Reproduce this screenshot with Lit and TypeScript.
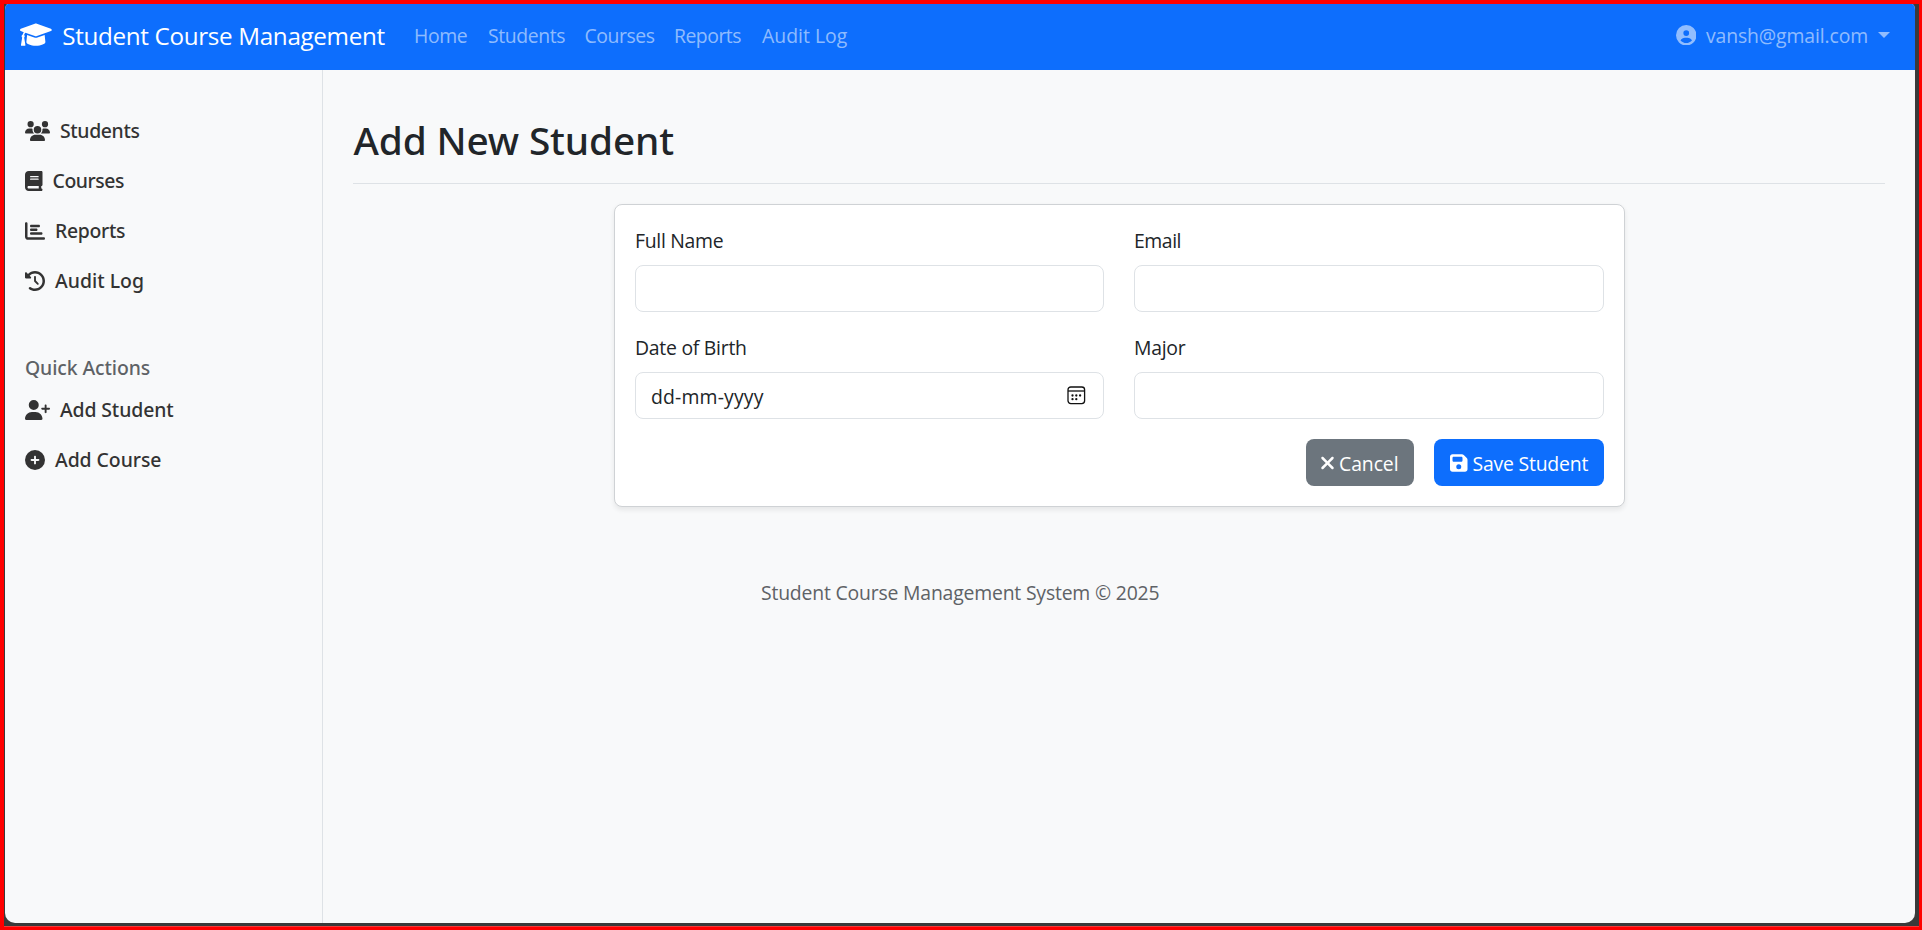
import { LitElement, html, css } from "lit";
import { styleMap } from "lit/directives/style-map.js";

interface Icon {
  w: number;
  d: string;
}

const ICONS: Record<string, Icon> = {
  cap: {
    w: 640,
    d: "M623.1 136.9l-282.7-101.2c-13.73-4.91-28.7-4.91-42.43 0L16.05 136.9C6.438 140.4 0 149.6 0 160s6.438 19.65 16.05 23.09L76.07 204.6c-11.89 15.8-20.26 34.16-24.55 53.95C40.05 263.4 32 274.8 32 288c0 9.953 4.814 18.49 11.94 24.36l-24.83 149C17.48 471.1 25 480 34.89 480H93.11c9.887 0 17.41-8.879 15.78-18.63l-24.83-149C91.19 306.5 96 297.1 96 288c0-10.29-5.174-19.03-12.72-24.89c4.252-17.76 12.88-33.82 24.94-47.03l190.6 68.23c13.73 4.91 28.7 4.91 42.43 0l282.7-101.2C633.6 179.6 640 170.4 640 160S633.6 140.4 623.1 136.9zM351.1 314.4C341.7 318.1 330.9 320 320 320c-10.92 0-21.69-1.867-32-5.555L142.8 262.5L128 405.3C128 446.6 213.1 480 320 480c105.1 0 192-33.4 192-74.67l-14.78-142.9L351.1 314.4z",
  },
  users: {
    w: 640,
    d: "M144 0a80 80 0 1 1 0 160A80 80 0 1 1 144 0zM512 0a80 80 0 1 1 0 160A80 80 0 1 1 512 0zM0 298.700C0 239.800 47.800 192 106.700 192h42.700c15.900 0 31 3.500 44.600 9.700c-1.300 7.200-1.900 14.700-1.900 22.300c0 38.200 16.800 72.500 43.300 96c-.2 0-.4 0-.7 0H21.300C9.600 320 0 310.400 0 298.700zM405.300 320c-.2 0-.4 0-.7 0c26.600-23.500 43.300-57.800 43.300-96c0-7.600-.7-15-1.900-22.300c13.600-6.300 28.700-9.700 44.600-9.700h42.700C592.200 192 640 239.800 640 298.700c0 11.800-9.600 21.300-21.300 21.300H405.300zM224 224a96 96 0 1 1 192 0 96 96 0 1 1 -192 0zM128 485.300C128 411.700 187.700 352 261.300 352H378.700C452.300 352 512 411.700 512 485.300c0 14.700-11.900 26.700-26.700 26.700H154.700c-14.700 0-26.700-11.900-26.700-26.700z",
  },
  book: {
    w: 448,
    d: "M96 0C43 0 0 43 0 96V416c0 53 43 96 96 96H384h32c17.700 0 32-14.300 32-32s-14.300-32-32-32V384c17.700 0 32-14.300 32-32V32c0-17.700-14.300-32-32-32H384 96zm0 384H352v64H96c-17.700 0-32-14.300-32-32s14.300-32 32-32zm32-240c0-8.800 7.200-16 16-16H336c8.800 0 16 7.200 16 16s-7.200 16-16 16H144c-8.800 0-16-7.200-16-16zm16 48H336c8.800 0 16 7.200 16 16s-7.200 16-16 16H144c-8.800 0-16-7.200-16-16s7.200-16 16-16z",
  },
  chart: {
    w: 512,
    d: "M32 32c17.700 0 32 14.300 32 32V400c0 8.800 7.200 16 16 16H480c17.700 0 32 14.300 32 32s-14.300 32-32 32H80c-44.200 0-80-35.800-80-80V64C0 46.300 14.300 32 32 32zm96 96c0-17.700 14.300-32 32-32l192 0c17.700 0 32 14.300 32 32s-14.300 32-32 32H160c-17.700 0-32-14.300-32-32zm32 64H288c17.700 0 32 14.300 32 32s-14.300 32-32 32H160c-17.700 0-32-14.300-32-32s14.300-32 32-32zm0 96H416c17.700 0 32 14.300 32 32s-14.300 32-32 32H160c-17.700 0-32-14.300-32-32s14.300-32 32-32z",
  },
  history: {
    w: 512,
    d: "M75 75L41 41C25.900 25.900 0 36.600 0 57.900V168c0 13.300 10.700 24 24 24H134.100c21.400 0 32.100-25.900 17-41l-30.800-30.800C155 85.500 203 64 256 64c106 0 192 86 192 192s-86 192-192 192c-40.800 0-78.600-12.700-109.700-34.400c-14.500-10.100-34.400-6.600-44.600 7.900s-6.600 34.400 7.900 44.600C151.200 495 201.700 512 256 512c141.400 0 256-114.600 256-256S397.400 0 256 0C185.300 0 121.300 28.700 75 75zm181 53c-13.300 0-24 10.700-24 24V256c0 6.400 2.500 12.500 7 17l72 72c9.400 9.400 24.600 9.400 33.900 0s9.400-24.600 0-33.900l-65-65V152c0-13.300-10.700-24-24-24z",
  },
  userPlus: {
    w: 640,
    d: "M96 128a128 128 0 1 1 256 0A128 128 0 1 1 96 128zM0 482.300C0 383.800 79.800 304 178.300 304h91.400C368.200 304 448 383.800 448 482.300c0 16.400-13.300 29.700-29.700 29.700H29.700C13.300 512 0 498.700 0 482.300zM504 312V248H440c-13.300 0-24-10.700-24-24s10.700-24 24-24h64V136c0-13.300 10.700-24 24-24s24 10.700 24 24v64h64c13.300 0 24 10.700 24 24s-10.700 24-24 24H552v64c0 13.300-10.700 24-24 24s-24-10.700-24-24z",
  },
  plusCircle: {
    w: 512,
    d: "M256 512A256 256 0 1 0 256 0a256 256 0 1 0 0 512zM232 344V280H168c-13.300 0-24-10.700-24-24s10.700-24 24-24h64V168c0-13.300 10.700-24 24-24s24 10.700 24 24v64h64c13.300 0 24 10.700 24 24s-10.700 24-24 24H280v64c0 13.300-10.700 24-24 24s-24-10.700-24-24z",
  },
  userCircle: {
    w: 512,
    d: "M399 384.200C376.900 345.800 335.400 320 288 320H224c-47.400 0-88.900 25.800-111 64.200c35.200 39.200 86.200 63.800 143 63.800s107.800-24.700 143-63.800zM0 256a256 256 0 1 1 512 0A256 256 0 1 1 0 256zm256 16a72 72 0 1 0 0-144 72 72 0 1 0 0 144z",
  },
  times: {
    w: 384,
    d: "M342.600 150.600c12.500-12.500 12.500-32.800 0-45.300s-32.800-12.500-45.300 0L192 210.700 86.600 105.400c-12.500-12.500-32.800-12.500-45.300 0s-12.500 32.800 0 45.300L146.700 256 41.400 361.400c-12.500 12.500-12.500 32.800 0 45.300s32.800 12.500 45.300 0L192 301.300 297.400 406.600c12.500 12.500 32.800 12.500 45.300 0s12.500-32.800 0-45.300L237.300 256 342.600 150.600z",
  },
  save: {
    w: 448,
    d: "M64 32C28.700 32 0 60.700 0 96V416c0 35.300 28.700 64 64 64H384c35.300 0 64-28.700 64-64V173.300c0-17-6.700-33.300-18.700-45.300L352 50.700C340 38.700 323.700 32 306.700 32H64zm0 96c0-17.700 14.300-32 32-32H288c17.700 0 32 14.300 32 32v64c0 17.700-14.300 32-32 32H96c-17.700 0-32-14.300-32-32V128zM224 288a64 64 0 1 1 0 128 64 64 0 1 1 0-128z",
  },
};

const icon = (name: string, size = 20) => {
  const i = ICONS[name];
  return html`<svg class="icon" viewBox="0 0 ${i.w} 512" width=${(i.w / 512) * size} height=${size}>
    <path fill="currentColor" fill-rule="evenodd" d=${i.d}></path>
  </svg>`;
};

/* Text run with its own tracking, in pixels. */
const run = (text: string, tracking: number) =>
  html`<span class="run" style=${styleMap({ letterSpacing: `${tracking}px` })}>${text}</span>`;

const NAV = [
  { text: "Home", tracking: -0.378, width: 54 },
  { text: "Students", tracking: -0.398, width: 76.5 },
  { text: "Courses", tracking: -0.436, width: 69.5 },
  { text: "Reports", tracking: -0.502, width: 68 },
  { text: "Audit Log", tracking: 0.018, width: 86 },
];

const SIDE = [
  { icon: "users", text: "Students", tracking: -0.36 },
  { icon: "book", text: "Courses", tracking: -0.43 },
  { icon: "chart", text: "Reports", tracking: -0.3 },
  { icon: "history", text: "Audit Log", tracking: 0.02 },
];

const QUICK = [
  { icon: "userPlus", text: "Add Student", tracking: -0.116 },
  { icon: "plusCircle", text: "Add Course", tracking: -0.05 },
];

class AppRoot extends LitElement {
  static styles = css`
    :host {
      display: block;
      box-sizing: border-box;
      width: 1922px;
      height: 930px;
      background: #3a3a3a;
      border: solid #f00;
      border-width: 4px 3px 3px 4px;
      font: 400 19.4px/30px "Open Sans", "Noto Sans", sans-serif;
      color: #212529;
    }
    * { box-sizing: border-box; }
    .frame {
      height: 100%;
      padding: 0 4px 3px 1px;
      border-bottom: 1px solid #f53a3a;
    }
    .page {
      height: 100%;
      display: flex;
      flex-direction: column;
      background: #f8f9fa;
      border-radius: 3px 3px 10px 10px / 6px 6px 10px 10px;
      overflow: hidden;
    }
    .icon { display: block; flex: none; }
    .run { white-space: nowrap; }
    .navbar {
      flex: 0 0 66px;
      display: flex;
      align-items: center;
      padding: 0 25px 4px 15px;
      background: #0d6efd;
      color: rgba(255, 255, 255, 0.55);
    }
    .brand {
      display: flex;
      align-items: center;
      gap: 10.5px;
      width: 394px;
      color: #fff;
      font-size: 24.25px;
    }
    .brand .run { padding-top: 1px; }
    .links { display: flex; gap: 20px; flex: 1; padding-top: 1px; }
    .user { display: flex; align-items: center; gap: 10px; }
    .user .run { padding-top: 1px; }
    .caret {
      border: 6px solid transparent;
      border-top-color: currentColor;
      border-bottom: 0;
    }
    .body { flex: 1; display: flex; min-height: 0; }
    .side {
      flex: 0 0 318px;
      border-right: 1px solid #dee2e6;
      padding: 36px 20px 0;
      font-family: "Noto Sans", sans-serif;
      font-weight: 500;
      color: #333;
    }
    .item { display: flex; align-items: center; gap: 10px; height: 50px; }
    .heading { height: 30px; margin: 47px 0 1.5px; color: #5e6266; }
    .main { flex: 1; padding: 46px 30px 0; }
    h1 {
      margin: 0;
      height: 68px;
      padding-left: 0.5px;
      border-bottom: 1px solid #dee2e6;
      font: 500 38.8px/48px "Noto Sans", sans-serif;
    }
    .card {
      width: 1011px;
      height: 303px;
      margin: 20px 0 0 261px;
      padding: 20px;
      background: #fff;
      border: 1px solid #cfd2d5;
      border-radius: 8px;
      box-shadow: 0 2.5px 5px rgba(0, 0, 0, 0.075);
    }
    .fields { display: grid; grid-template-columns: 469px 470px; gap: 20px 30px; }
    .field { display: flex; flex-direction: column; gap: 9px; height: 87px; }
    .label { height: 31px; padding-top: 1px; }
    .input {
      display: flex;
      align-items: center;
      justify-content: space-between;
      height: 47px;
      padding: 2px 17.5px 0 15px;
      border: 1px solid #dee2e6;
      border-radius: 8px;
      background: #fff;
    }
    .cal { display: block; margin-top: -2px; }
    .actions { display: flex; justify-content: flex-end; gap: 20px; margin-top: 20px; }
    .btn {
      display: flex;
      align-items: center;
      gap: 4px;
      height: 47px;
      padding: 0 0 0 14px;
      border: 0;
      border-radius: 8px;
      color: #fff;
      font: inherit;
    }
    .btn .run { padding-top: 2px; }
    .cancel { width: 108px; background: #6c757d; }
    .save { width: 170px; padding-left: 16px; gap: 5px; background: #0d6efd; }
    .footer { margin: 71px 0 0 408px; color: #5e6266; }
  `;

  private field(text: string, tracking: number, content: unknown = "") {
    return html`<div class="field">
      <div class="label">${run(text, tracking)}</div>
      <div class="input">${content}</div>
    </div>`;
  }

  render() {
    return html`<div class="frame"><div class="page">
      <nav class="navbar">
        <div class="brand">${icon("cap", 25.4)}${run("Student Course Management", -0.346)}</div>
        <div class="links">
          ${NAV.map((n) => html`<div style=${styleMap({ width: `${n.width}px` })}>${run(n.text, n.tracking)}</div>`)}
        </div>
        <div class="user">${icon("userCircle", 20.5)}${run("vansh@gmail.com", -0.13)}<span class="caret"></span></div>
      </nav>
      <div class="body">
        <aside class="side">
          ${SIDE.map((s) => html`<div class="item">${icon(s.icon)}${run(s.text, s.tracking)}</div>`)}
          <div class="heading">${run("Quick Actions", -0.1)}</div>
          ${QUICK.map((s) => html`<div class="item">${icon(s.icon)}${run(s.text, s.tracking)}</div>`)}
        </aside>
        <main class="main">
          <h1>${run("Add New Student", -0.15)}</h1>
          <section class="card">
            <div class="fields">
              ${this.field("Full Name", -0.286)}
              ${this.field("Email", -0.457)}
              ${this.field("Date of Birth", -0.26, html`${run("dd-mm-yyyy", 0.167)}
                <svg class="cal" width="19" height="19" viewBox="0 0 19 19">
                  <rect x="1" y="1" width="16.6" height="16.6" rx="2.8" fill="none" stroke="#111" stroke-width="1.3"></rect>
                  <path d="M1 5H17.6" stroke="#111" stroke-width="1.3"></path>
                  <g fill="#111">
                    <circle cx="5.5" cy="9.5" r="1.15"></circle><circle cx="9.3" cy="9.5" r="1.15"></circle><circle cx="13.100" cy="9.5" r="1.15"></circle>
                    <circle cx="5.5" cy="13.2" r="1.15"></circle><circle cx="9.3" cy="13.2" r="1.15"></circle>
                  </g>
                </svg>`)}
              ${this.field("Major", -0.272)}
            </div>
            <div class="actions">
              <button class="btn cancel">${icon("times")}${run("Cancel", -0.08)}</button>
              <button class="btn save">${icon("save")}${run("Save Student", -0.2)}</button>
            </div>
          </section>
          <div class="footer">${run("Student Course Management System © 2025", -0.19)}</div>
        </main>
      </div>
    </div></div>`;
  }
}
customElements.define("app-root", AppRoot);
